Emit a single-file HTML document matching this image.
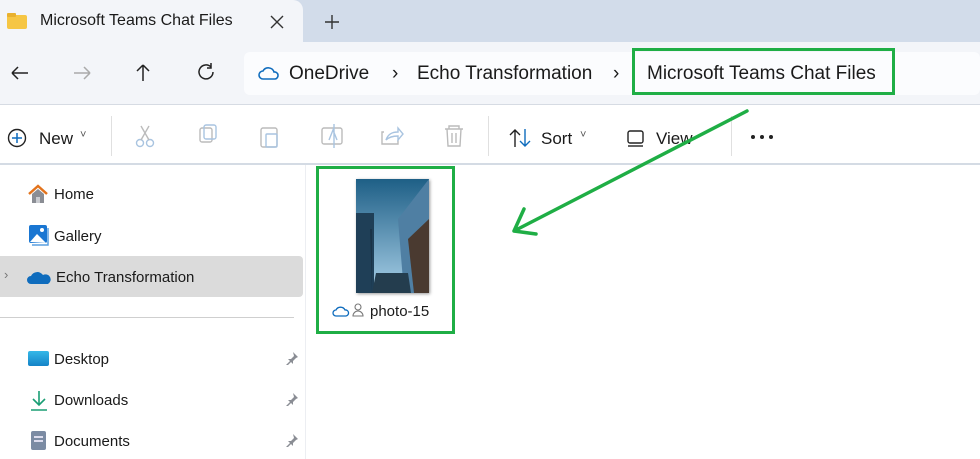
<!DOCTYPE html>
<html><head><meta charset="utf-8"><style>
*{margin:0;padding:0;box-sizing:border-box}
body{width:980px;height:459px;overflow:hidden;background:#fff;font-family:"Liberation Sans",sans-serif;color:#1a1a1a;position:relative}
.a{position:absolute}
.t{font-size:17px;white-space:nowrap}
.s{font-size:15px;white-space:nowrap}
</style></head><body>
<div class="a" style="left:0;top:0;width:980px;height:42px;background:#d2dcea"></div>
<div class="a" style="left:0;top:0;width:303px;height:42px;background:#f3f5f9;border-radius:0 10px 0 0"></div>
<div class="a" style="left:7px;top:15px;width:20px;height:14px;background:#f6c644;border-radius:2px"></div>
<div class="a" style="left:7px;top:13px;width:9px;height:4px;background:#e9b12f;border-radius:1px"></div>
<div class="a s" style="left:40px;top:12px;font-size:16px">Microsoft Teams Chat Files</div>
<svg class="a" style="left:270px;top:15px" width="14" height="14" stroke="#333" stroke-width="1.4"><path d="M1 1l12 12M13 1L1 13"/></svg>
<svg class="a" style="left:325px;top:15px" width="14" height="14" stroke="#333" stroke-width="1.4"><path d="M7 0v14M0 7h14"/></svg>
<div class="a" style="left:0;top:42px;width:980px;height:63px;background:#f3f5f9"></div>
<div class="a" style="left:244px;top:52px;width:736px;height:43px;background:#fbfcfe;border-radius:6px"></div>
<svg class="a" style="left:0;top:55px" width="230" height="36" viewBox="0 0 230 36" fill="none" stroke="#222" stroke-width="1.5">
<path d="M12 18h16M12 18l6-6M12 18l6 6"/>
<path d="M74 18h16M90 18l-6-6M90 18l-6 6" stroke="#aaa"/>
<path d="M143 10v16M143 10l-6 6M143 10l6 6"/>
<path d="M211 12a7 7 0 1 0 2 5M211 8v5h-4" />
</svg>
<svg class="a" style="left:258px;top:65px" width="22" height="16" viewBox="0 0 22 16" fill="none" stroke="#0f6cbd" stroke-width="1.6"><path d="M5 14a4 4 0 0 1 0-8 6 6 0 0 1 11 1 3.5 3.5 0 0 1 1 7z"/></svg>
<div class="a t" style="left:289px;top:63px;font-size:19px">OneDrive</div>
<div class="a t" style="left:392px;top:63px;font-size:19px">›</div>
<div class="a t" style="left:417px;top:63px;font-size:19px">Echo Transformation</div>
<div class="a t" style="left:613px;top:63px;font-size:19px">›</div>
<div class="a" style="left:632px;top:48px;width:263px;height:47px;border:3px solid #1fae45"></div>
<div class="a t" style="left:647px;top:63px;font-size:19px">Microsoft Teams Chat Files</div>
<div class="a" style="left:0;top:104px;width:980px;height:1px;background:#d6dbe3"></div>
<div class="a" style="left:0;top:163px;width:980px;height:2px;background:#d4dbe4"></div>
<svg class="a" style="left:7px;top:128px" width="20" height="20"><circle cx="10" cy="10" r="8.5" fill="none" stroke="#222" stroke-width="1.4"/><path d="M10 5v10M5 10h10" stroke="#0f6cbd" stroke-width="1.5"/></svg>
<div class="a s" style="left:39px;top:129px;font-size:17px">New</div>
<div class="a" style="left:80px;top:129px;font-size:11px;color:#555">˅</div>
<div class="a" style="left:111px;top:116px;width:1px;height:40px;background:#e0e0e0"></div>
<svg class="a" style="left:130px;top:122px" width="360" height="30" fill="none" stroke="#a9c4e0" stroke-width="1.4">
<circle cx="10" cy="21" r="3.5"/><circle cx="20" cy="21" r="3.5"/><path d="M11 18L19 4M19 18L11 4" stroke="#bbb"/>
<rect x="70" y="6" width="12" height="14" rx="2" stroke="#bbb"/><rect x="74" y="3" width="12" height="14" rx="2"/>
<rect x="131" y="6" width="16" height="19" rx="2" stroke="#bbb"/><rect x="136" y="12" width="11" height="13" rx="1"/>
<rect x="192" y="6" width="20" height="16" rx="2" stroke="#bbb"/><path d="M204 2v24M199 18l4-10 4 10"/>
<path d="M254 10h-2v12h16v-4" stroke="#bbb"/><path d="M256 18c2-6 6-8 12-8v-4l5 6-5 6v-4c-5 0-9 1-12 4z"/>
<path d="M315 7h18M319 7v-3h10v3M317 7l1 17h12l1-17M322 11v10M326 11v10" stroke="#bbb"/>
</svg>
<div class="a" style="left:488px;top:116px;width:1px;height:40px;background:#e0e0e0"></div>
<svg class="a" style="left:509px;top:127px" width="24" height="22" fill="none" stroke-width="1.4"><path d="M6 20V3M1 8l5-5 5 5" stroke="#222"/><path d="M16 2v17M11 14l5 5 5-5" stroke="#0f6cbd"/></svg>
<div class="a s" style="left:541px;top:129px;font-size:17px">Sort</div>
<div class="a" style="left:580px;top:129px;font-size:11px;color:#555">˅</div>
<svg class="a" style="left:626px;top:129px" width="20" height="20" fill="none" stroke="#222" stroke-width="1.4"><rect x="2" y="2" width="15" height="12" rx="2"/><path d="M2 17h15"/></svg>
<div class="a s" style="left:656px;top:129px;font-size:17px">View</div>
<div class="a" style="left:731px;top:116px;width:1px;height:40px;background:#e0e0e0"></div>
<svg class="a" style="left:750px;top:134px" width="26" height="6" fill="#222"><circle cx="3" cy="3" r="2"/><circle cx="12" cy="3" r="2"/><circle cx="21" cy="3" r="2"/></svg>
<div class="a" style="left:305px;top:165px;width:1px;height:294px;background:#eceef2"></div>
<svg class="a" style="left:27px;top:183px" width="22" height="22"><path d="M2 11L11 3l9 8" fill="none" stroke="#e3731c" stroke-width="2.5"/><path d="M5 11v9h12v-9L11 6z" fill="#8a8d94"/><rect x="9" y="14" width="4" height="6" fill="#c9cbd0"/></svg>
<div class="a s" style="left:54px;top:186px">Home</div>
<svg class="a" style="left:28px;top:224px" width="22" height="22"><rect x="1" y="1" width="18" height="18" rx="2" fill="#1976d2"/><path d="M2 18l7-8 9 9z" fill="#fff"/><circle cx="14" cy="6" r="2" fill="#fff"/><path d="M20 4v17H4" stroke="#5a9fe0" stroke-width="1.5" fill="none"/></svg>
<div class="a s" style="left:54px;top:228px">Gallery</div>
<div class="a" style="left:0;top:256px;width:303px;height:41px;background:#dbdbdb;border-radius:0 4px 4px 0"></div>
<div class="a" style="left:4px;top:267px;font-size:13px;color:#777">›</div>
<svg class="a" style="left:27px;top:269px" width="24" height="16"><path d="M4 15a4 4 0 0 1 0-8 7 7 0 0 1 12-1 5 5 0 0 1 5 9z" fill="#0f6cbd"/></svg>
<div class="a s" style="left:56px;top:269px">Echo Transformation</div>
<div class="a" style="left:0;top:317px;width:294px;height:1px;background:#cfcfcf"></div>
<div class="a" style="left:28px;top:351px;width:21px;height:15px;background:linear-gradient(#35b8e8,#1583c7);border-radius:2px"></div>
<div class="a s" style="left:54px;top:351px">Desktop</div>
<svg class="a" style="left:30px;top:390px" width="18" height="22" stroke="#1a9e74" stroke-width="1.6" fill="none"><path d="M9 1v14M3 9l6 6 6-6M1 20h16"/></svg>
<div class="a s" style="left:54px;top:392px">Downloads</div>
<div class="a" style="left:31px;top:431px;width:15px;height:19px;background:#7b8ba3;border-radius:2px"></div>
<div class="a" style="left:34px;top:436px;width:9px;height:6px;border-top:2px solid #dde;border-bottom:2px solid #dde"></div>
<div class="a s" style="left:54px;top:433px">Documents</div>
<svg class="a" style="left:285px;top:351px" width="14" height="14" fill="#8a8d94"><path d="M8 1l5 5-2 1-3 3 0 3-2-2-4 4-1-1 4-4-2-2 3 0 3-3z"/></svg>
<svg class="a" style="left:285px;top:392px" width="14" height="14" fill="#8a8d94"><path d="M8 1l5 5-2 1-3 3 0 3-2-2-4 4-1-1 4-4-2-2 3 0 3-3z"/></svg>
<svg class="a" style="left:285px;top:433px" width="14" height="14" fill="#8a8d94"><path d="M8 1l5 5-2 1-3 3 0 3-2-2-4 4-1-1 4-4-2-2 3 0 3-3z"/></svg>
<div class="a" style="left:316px;top:166px;width:139px;height:168px;border:3px solid #1fae45"></div>
<svg class="a" style="left:356px;top:179px;box-shadow:1px 1px 3px #999" width="73" height="114">
<defs><linearGradient id="sk" x1="0" y1="0" x2="0" y2="1"><stop offset="0" stop-color="#1e5f86"/><stop offset="1" stop-color="#a9d0e8"/></linearGradient></defs>
<rect width="73" height="114" fill="url(#sk)"/>
<path d="M0 34h18v80H0z" fill="#1f3f57"/>
<path d="M42 40L73 0v114H48z" fill="#4f7fa3"/>
<path d="M52 60L73 40v74H58z" fill="#4a3a30"/>
<path d="M16 114V50h-2" fill="#1a3347"/>
<path d="M16 114l4-20h32l3 20z" fill="#243d4e"/>
</svg>
<svg class="a" style="left:332px;top:304px" width="18" height="13"><path d="M4 12a3 3 0 0 1 0-6 5 5 0 0 1 9 0 3 3 0 0 1 1 6z" fill="none" stroke="#0f6cbd" stroke-width="1.3"/></svg>
<svg class="a" style="left:352px;top:303px" width="12" height="14" fill="none" stroke="#777" stroke-width="1.1"><circle cx="6" cy="4" r="3"/><path d="M1 13a5 5 0 0 1 10 0z"/></svg>
<div class="a s" style="left:370px;top:303px">photo-15</div>
<svg class="a" style="left:0;top:0" width="980" height="459"><path d="M747 111L514 231M514 231l10-22M514 231l22 3" stroke="#1fae45" stroke-width="3.5" fill="none" stroke-linecap="round"/></svg>
</body></html>
